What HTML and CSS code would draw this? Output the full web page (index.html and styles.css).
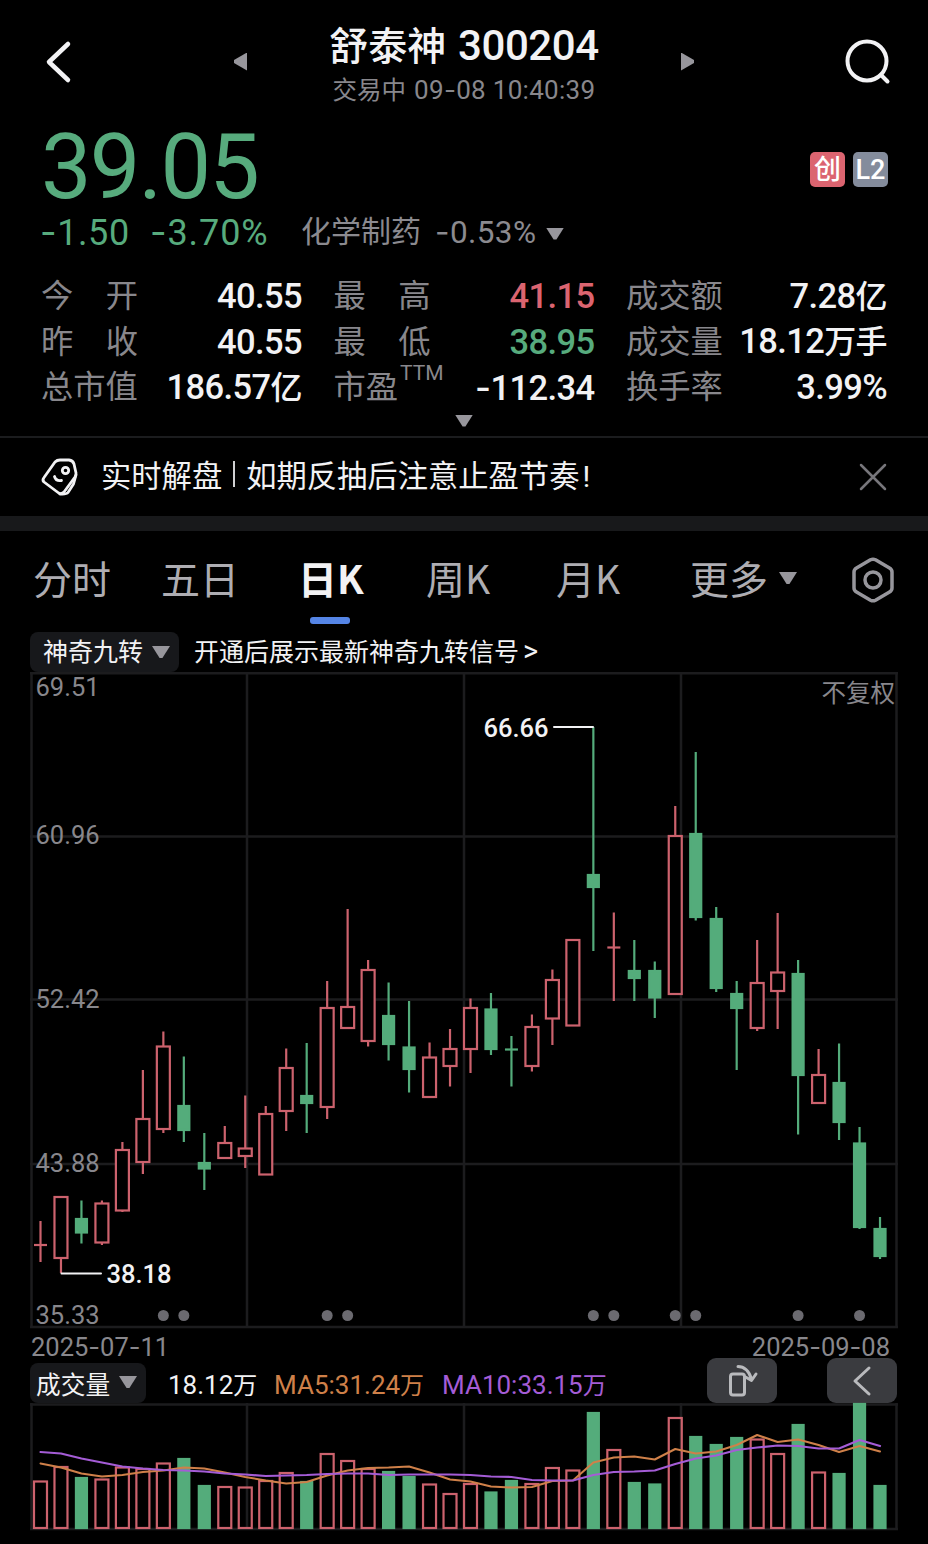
FILE: index.html
```html
<!DOCTYPE html>
<html lang="zh-CN">
<head>
    <meta charset="UTF-8">
    <meta name="viewport" content="width=device-width, initial-scale=1.0">
    <title>舒泰神 300204</title>
    <link rel="stylesheet" href="styles.css">
</head>
<body>

<header class="header">
    <svg class="back" width="28" height="44" viewBox="0 0 28 44"><path d="M24 4 L5 22 L24 40"/></svg>
    <span class="tri tri-left"></span>
    <div class="title">
        <h1>舒泰神 <span class="code">300204</span></h1>
        <p>交易中 <span class="time">09<i>-</i>08 10:40:39</span></p>
    </div>
    <span class="tri tri-right"></span>
    <svg class="search" width="48" height="48" viewBox="0 0 48 48"><circle cx="22" cy="22" r="19.5"/><path d="M36 36 L42.500 42.500"/></svg>
</header>

<section class="quote">
    <div class="price-row">
        <span class="price">39.05</span>
        <span class="badge badge-red">创</span>
        <span class="badge badge-gray">L2</span>
    </div>
    <div class="change-row">
        <span class="change"><i>-</i>1.50</span>
        <span class="change percent"><i>-</i>3.70%</span>
        <span class="sector">化学制药</span>
        <span class="sector-change"><i>-</i>0.53%</span>
        <span class="tri tri-down"></span>
    </div>
    <div class="stats">
        <div class="stat"><span class="label"><b>今</b><b>开</b></span><span class="value">40.55</span></div>
        <div class="stat"><span class="label"><b>最</b><b>高</b></span><span class="value up">41.15</span></div>
        <div class="stat"><span class="label">成交额</span><span class="value">7.28<em>亿</em></span></div>
        <div class="stat"><span class="label"><b>昨</b><b>收</b></span><span class="value">40.55</span></div>
        <div class="stat"><span class="label"><b>最</b><b>低</b></span><span class="value down">38.95</span></div>
        <div class="stat"><span class="label">成交量</span><span class="value">18.12<em>万手</em></span></div>
        <div class="stat"><span class="label">总市值</span><span class="value">186.57<em>亿</em></span></div>
        <div class="stat"><span class="label">市盈<sup>TTM</sup></span><span class="value"><i>-</i>112.34</span></div>
        <div class="stat"><span class="label">换手率</span><span class="value">3.99%</span></div>
    </div>
    <div class="expand"><span class="tri tri-down"></span></div>
</section>

<section class="notice">
    <svg class="tag" width="38" height="40" viewBox="0 0 38 40">
        <path d="M14 5 Q16 3 19 3 L28 3 Q32 3.500 33 7 L35 16 Q35.200 18 34 20 L23 35 Q20 38 17 35.500 L3 25 Q1 23 3 20.500 Z"/>
        <path d="M35 18 L32.500 27 L27 35.500 Q25.500 37.500 19 37"/>
        <circle cx="24.500" cy="13.500" r="3.200"/>
        <path d="M13.500 19.500 Q15 24.500 20.500 23.500"/>
    </svg>
    <p>实时解盘<span class="bar"></span>如期反抽后注意止盈节奏<span class="mark-end">!</span></p>
    <svg class="close" width="28" height="28" viewBox="0 0 28 28"><path d="M2 2 L26 26 M26 2 L2 26"/></svg>
</section>

<nav class="tabs">
    <a>分时</a>
    <a>五日</a>
    <a class="active">日K</a>
    <a>周K</a>
    <a>月K</a>
    <a class="more">更多<span class="tri tri-down"></span></a>
    <svg class="setting" width="44" height="48" viewBox="0 0 44 48">
        <path d="M19.500 3.800 Q22 2.500 24.500 3.800 L38.500 12 Q41 13.500 41 16 L41 32 Q41 34.500 38.500 36 L24.500 44.200 Q22 45.500 19.500 44.200 L5.500 36 Q3 34.500 3 32 L3 16 Q3 13.500 5.500 12 Z"/>
        <circle cx="22" cy="24" r="8"/>
    </svg>
</nav>

<main>
    <div class="signal">
        <span class="pill">神奇九转<span class="tri tri-down"></span></span>
        <span class="signal-text">开通后展示最新神奇九转信号<small>&gt;</small></span>
    </div>

    <svg class="kline" id="kline" width="868" height="656" viewBox="30 672 868 656"></svg>

    <div class="dates">
        <span>2025<i>-</i>07<i>-</i>11</span>
        <span>2025<i>-</i>09<i>-</i>08</span>
    </div>

    <div class="volume-bar">
        <span class="pill">成交量<span class="tri tri-down"></span></span>
        <span class="vol">18.12<em>万</em></span>
        <span class="ma5">MA5:31.24<em>万</em></span>
        <span class="ma10">MA10:33.15<em>万</em></span>
        <button class="rotate">
            <svg width="32" height="36" viewBox="0 0 32 36"><rect x="4.500" y="11" width="14" height="21" rx="2.500"/><path d="M12 3.500 Q21.500 3.500 25.500 16 M19.500 14 L25.500 17.500 L30 11"/></svg>
        </button>
        <button class="fold">
            <svg width="20" height="32" viewBox="0 0 20 32"><path d="M17 3 L3 16 L17 29"/></svg>
        </button>
    </div>

    <svg class="volume" id="volume" width="868" height="127" viewBox="30 1403 868 127"></svg>
</main>

<script src="chart.js"></script>
</body>
</html>
```
FILE: styles.css
```css
* {
    box-sizing: border-box;
}

body {
    margin: 0;
    width: 928px;
    height: 1544px;
    overflow: hidden;
    background-color: #000;
    color: #f2f2f4;
    font-family: Roboto, "Noto Sans CJK SC", sans-serif;
}

h1, p {
    margin: 0;
    font-weight: normal;
}

/* wide minus sign */
i {
    font-family: Inter, sans-serif;
    font-style: normal;
}

em, b {
    font-style: normal;
    font-weight: inherit;
}

svg {
    display: block;
    overflow: visible;
    fill: none;
    stroke-linecap: round;
    stroke-linejoin: round;
}

/* Small arrows */
.tri {
    display: inline-block;
    background-color: #97969c;
}

.tri-down {
    width: 18px;
    height: 12px;
    clip-path: polygon(0 0, 100% 0, 58% 100%, 42% 100%);
}

.tri-left {
    width: 13px;
    height: 18px;
    clip-path: polygon(100% 0, 100% 100%, 0 58%, 0 42%);
}

.tri-right {
    width: 13px;
    height: 18px;
    clip-path: polygon(0 0, 0 100%, 100% 58%, 100% 42%);
}

/* Header */
.header {
    display: flex;
    align-items: center;
    height: 117px;
    padding: 6px 35px 0 44px;
}

.back {
    stroke: #f2f2f4;
    stroke-width: 4.5;
}

.header .tri-left {
    margin-left: 162px;
}

.title {
    width: 434px;
    padding-top: 3px;
    text-align: center;
}

.title h1 {
    font-size: 39px;
    line-height: 51px;
    font-weight: 500;
    white-space: nowrap;
}

.title .code {
    font-size: 42px;
    letter-spacing: -0.4px;
    margin-left: 2px;
}

.title p {
    font-size: 24.5px;
    line-height: 33px;
    color: #88878c;
}

.title .time {
    font-size: 26px;
    letter-spacing: 0.3px;
    margin-left: 2px;
}

.search {
    margin-left: auto;
    margin-top: 2px;
    stroke: #f2f2f4;
    stroke-width: 4;
}

/* Quote */
.quote {
    padding: 0 41px;
    border-bottom: 2px solid #1b1c1e;
    height: 321px;
}

.price-row {
    display: flex;
    align-items: center;
    height: 100px;
    margin-right: -1px;
}

.price {
    flex: 1;
    font-size: 90px;
    line-height: 100px;
    padding-top: 2px;
    letter-spacing: -1.8px;
    color: #57ab7d;
}

.badge {
    width: 35px;
    height: 35px;
    border-radius: 5px;
    margin-left: 8px;
    margin-top: 5px;
    font-size: 27px;
    line-height: 36px;
    font-weight: 500;
    text-align: center;
    color: #fff;
}

.badge-red {
    background-color: #db6470;
}

.badge-gray {
    background-color: #848c9c;
}

.change-row {
    display: flex;
    align-items: center;
    height: 30px;
    line-height: 30px;
    color: #8b8a8f;
}

.change {
    font-size: 36px;
    letter-spacing: 0.6px;
    color: #57ab7d;
    width: 110px;
    margin-left: -1px;
}

.percent {
    width: 151px;
    letter-spacing: 0.9px;
    margin-left: 0;
}

.sector {
    font-size: 30px;
    line-height: 32px;
    width: 134px;
}

.sector-change {
    font-size: 31.5px;
    letter-spacing: 0.4px;
    width: 110px;
}

.change-row .tri {
    margin-top: 3px;
    margin-left: 1px;
}

.stats {
    display: grid;
    grid-template-columns: repeat(3, 261px);
    column-gap: 31.5px;
    grid-auto-rows: 45.5px;
    margin-top: 27px;
}

.stat {
    display: flex;
    justify-content: space-between;
    align-items: center;
    white-space: nowrap;
    line-height: 45px;
}

.label {
    display: flex;
    justify-content: space-between;
    width: 97px;
    font-size: 32.3px;
    color: #88878c;
}

.label sup {
    font-size: 21px;
    line-height: 16px;
    margin-left: 2px;
}

.value {
    font-size: 34.5px;
    font-weight: 500;
    letter-spacing: -0.6px;
}

.value em {
    font-size: 32px;
}

.up {
    color: #db6470;
}

.down {
    color: #57ab7d;
}

.expand {
    display: flex;
    justify-content: center;
    padding-top: 4px;
}

/* Notice */
.notice {
    display: flex;
    align-items: center;
    height: 93px;
    padding: 0 41px;
    border-bottom: 15px solid #18191b;
}

.tag {
    stroke: #f2f2f4;
    stroke-width: 2.8;
}

.notice p {
    flex: 1;
    margin-left: 22px;
    font-size: 30.3px;
    line-height: 40px;
}

.notice .bar {
    display: inline-block;
    width: 2px;
    height: 26px;
    margin: 0 11px;
    background-color: #d0d0d2;
}

.notice .mark-end {
    margin-left: 3px;
}

.close {
    stroke: #77767b;
    stroke-width: 2.5;
}

/* Tabs */
.tabs {
    display: grid;
    grid-template-columns: 128px 137px 128px 130px 134px 161px 44px;
    align-items: center;
    height: 101px;
    padding: 0 0 3px 33px;
}

.tabs a {
    font-family: "Noto Sans CJK SC", sans-serif;
    font-size: 39px;
    line-height: 50px;
    padding-bottom: 6px;
    color: #aeadb2;
}

.tabs .active {
    position: relative;
    font-weight: 700;
    color: #f2f2f4;
}

.tabs .active::after {
    content: "";
    position: absolute;
    left: 12px;
    bottom: -16px;
    width: 40px;
    height: 7px;
    border-radius: 3px;
    background-color: #5585e6;
}

.more .tri {
    margin-left: 11px;
    margin-bottom: 10px;
}

.setting {
    stroke: #97969c;
    stroke-width: 3.5;
}

/* Chart area */
main {
    width: 868px;
    margin: 0 30px;
}

.signal {
    display: flex;
    align-items: center;
    height: 40px;
    font-size: 25px;
    line-height: 36px;
}

.pill {
    display: flex;
    align-items: center;
    justify-content: space-between;
    width: 149px;
    height: 40px;
    padding: 2px 9px 0 13px;
    border-radius: 8px;
    background-color: #17181b;
    white-space: nowrap;
}

.pill .tri {
    margin-bottom: 2px;
}

.signal-text {
    margin-left: 15px;
    padding-top: 2px;
}

.signal-text small {
    font-size: 29px;
    line-height: 30px;
    margin-left: 4px;
}

.dates {
    display: flex;
    justify-content: space-between;
    height: 30px;
    padding: 3px 8px 0 1px;
    font-size: 25.5px;
    line-height: 31px;
    color: #88878c;
}

.volume-bar {
    display: flex;
    align-items: center;
    height: 45px;
    font-size: 26px;
    white-space: nowrap;
}

.volume-bar .pill {
    width: 116px;
    padding: 0 9px 0 6px;
    margin-top: 5px;
    font-size: 24.7px;
}

.volume-bar em {
    font-size: 24px;
}

.vol, .ma5, .ma10 {
    margin-top: 6px;
}

.vol {
    width: 106px;
    margin-left: 22px;
}

.ma5 {
    width: 168px;
    color: #cf8049;
}

.ma10 {
    color: #a45cd6;
}

.volume-bar button {
    display: flex;
    align-items: center;
    justify-content: center;
    width: 70px;
    height: 45px;
    padding: 0;
    border: none;
    border-radius: 9px;
    background-color: #3a3b3f;
    stroke: #b9babd;
    stroke-width: 3;
}

.volume-bar .rotate {
    margin-left: auto;
    margin-right: 50px;
}

.volume-bar .fold {
    margin-right: 1px;
}

/* Chart drawing */
.grid {
    stroke: #1c1c1e;
    stroke-width: 2.5;
    stroke-linecap: butt;
}

.candle-up {
    fill: #000;
    stroke: #cc626d;
    stroke-width: 2.2;
    stroke-linecap: butt;
    stroke-linejoin: miter;
}

.volume .candle-up {
    fill: none;
}

.candle-down {
    fill: #54ac7b;
    stroke: #54ac7b;
    stroke-width: 2.2;
    stroke-linecap: butt;
    stroke-linejoin: miter;
}

.dot {
    fill: #6b6a70;
}

.axis {
    fill: #88878c;
    font-size: 25.5px;
}

.right {
    font-size: 24.5px;
    text-anchor: end;
}

.mark {
    fill: #f2f2f4;
    font-size: 25.5px;
    font-weight: 500;
}

.mark-line {
    stroke: #f2f2f4;
    stroke-width: 2;
}

.line5 {
    stroke: #cf8049;
    stroke-width: 2;
}

.line10 {
    stroke: #a45cd6;
    stroke-width: 2.2;
}
```
FILE: chart.js
```js
// [direction, high, body top, body bottom, low]
const candles = [
    ["up", 1221, 1245, 1245, 1262], ["up", 1197, 1196, 1259, 1273],
    ["down", 1200.5, 1218, 1233.5, 1243.5], ["up", 1200.5, 1202.5, 1243.5, 1245],
    ["up", 1142, 1149, 1211.5, 1212], ["up", 1070, 1118, 1163, 1174],
    ["up", 1031.5, 1045.5, 1130, 1133], ["down", 1056.5, 1105, 1131, 1142],
    ["down", 1133, 1162, 1169.5, 1190], ["up", 1126, 1142, 1159, 1159],
    ["up", 1095.5, 1147.5, 1157, 1168], ["up", 1106, 1113, 1175.5, 1175],
    ["up", 1048.5, 1067, 1112, 1131], ["down", 1043, 1095, 1104, 1133],
    ["up", 981, 1007, 1108, 1119], ["up", 909, 1006, 1029, 1028],
    ["up", 960, 969, 1042, 1046.5], ["down", 982.5, 1015, 1045, 1060.5],
    ["down", 1001, 1046.5, 1070, 1092.5], ["up", 1042.5, 1056.5, 1098, 1097],
    ["up", 1029, 1048, 1067, 1086.5], ["up", 998.5, 1007, 1050, 1073],
    ["down", 993, 1008.5, 1050, 1055], ["down", 1036, 1049.5, 1049.5, 1086.5],
    ["up", 1014.5, 1026, 1067, 1071.5], ["up", 969.5, 979, 1019.5, 1045],
    ["up", 940, 939, 1026.5, 1026], ["down", 727, 874, 888, 951],
    ["up", 912.5, 947.5, 947.5, 1001], ["down", 940, 970, 979, 1001],
    ["down", 961.5, 970, 998.5, 1018], ["up", 806, 835, 995, 994],
    ["down", 752, 833, 918, 920.5], ["down", 907, 918, 989, 992],
    ["down", 981, 993, 1009, 1070], ["up", 940, 982, 1029, 1031],
    ["up", 913, 971.5, 992, 1029], ["down", 960, 973, 1076, 1134.5],
    ["up", 1049, 1074, 1104, 1103], ["down", 1043.5, 1082, 1123, 1140],
    ["down", 1127, 1142.5, 1228, 1229], ["down", 1217, 1228, 1257, 1259]
];

const volumes = [
    1480.5, 1466, 1477, 1478.5, 1466.5, 1468, 1462.5, 1458, 1485, 1486, 1486.5,
    1480, 1472, 1481, 1453, 1460, 1468, 1471, 1476, 1483.5, 1493, 1483, 1491.5,
    1480, 1483, 1467, 1469.5, 1412, 1449, 1482, 1483.5, 1417, 1436, 1444, 1437,
    1438.5, 1453, 1424, 1471.5, 1473, 1403, 1485
];

const ma5 = [
    1463.5, 1467.5, 1473.5, 1476.5, 1475, 1472, 1470.5, 1467.5, 1468.5, 1472.5,
    1477, 1480.5, 1483.5, 1482, 1475.5, 1470.5, 1468, 1467.5, 1466.5, 1472.5,
    1479.5, 1481.5, 1486.5, 1487.5, 1487, 1481, 1480.5, 1462.5, 1457.5, 1456.5,
    1459.5, 1449, 1453.5, 1451.5, 1445, 1435, 1442, 1439.5, 1445, 1452, 1446, 1451.5
];

const ma10 = [
    1452, 1453.5, 1458.5, 1462.5, 1466.5, 1468.5, 1470, 1470.5, 1471.5, 1473.5,
    1474.5, 1476, 1475.5, 1475, 1474, 1473.5, 1473.5, 1475, 1474.5, 1474.5,
    1474.5, 1475, 1476.5, 1477, 1480, 1480.5, 1480.5, 1475, 1472, 1471.5,
    1470.5, 1464, 1458.5, 1455.5, 1450, 1447.5, 1445.5, 1446, 1448.5, 1448.5, 1440, 1446
];

const dots = [6, 7, 14, 15, 27, 28, 31, 32, 37, 40];
const columns = [31.5, 247, 464, 681, 896.5];

const xOf = i => 40.5 + i * 20.476;

function drawGrid(rows, top, bottom) {
    let d = "";
    columns.forEach(x => d += `M${x} ${top}V${bottom}`);
    rows.forEach(y => d += `M30 ${y}H898`);
    return `<path class="grid" d="${d}"/>`;
}

// Red bars are hollow, green ones are solid
function drawBox(dir, x, top, bottom) {
    const half = dir === "up" ? 6.5 : 5.5;
    return `<rect class="candle-${dir}" x="${x - half}" y="${top + 1}" width="${half * 2}" height="${bottom - top - 2}"/>`;
}

function renderKline() {
    let html = drawGrid([673.2, 836.5, 999.5, 1164, 1327], 672, 1328);
    html += `
        <text class="axis" x="35.5" y="696">69.51</text>
        <text class="axis" x="35.5" y="844">60.96</text>
        <text class="axis" x="35.5" y="1008">52.42</text>
        <text class="axis" x="35.5" y="1172">43.88</text>
        <text class="axis" x="35.5" y="1324">35.33</text>
        <text class="axis right" x="895" y="701.5">不复权</text>`;
    candles.forEach(([dir, high, top, bottom, low], i) => {
        const x = xOf(i);
        html += `<path class="candle-${dir}" d="M${x} ${high}V${low}"/>`;
        if (top === bottom) {
            html += `<path class="candle-${dir}" d="M${x - 6.5} ${top}H${x + 6.5}"/>`;
        } else {
            html += drawBox(dir, x, top, bottom);
        }
    });
    dots.forEach(i => html += `<circle class="dot" cx="${xOf(i)}" cy="1315.5" r="5.5"/>`);
    html += `
        <path class="mark-line" d="M554 727H593 M61.500 1273.500H101"/>
        <text class="mark" x="483.5" y="736.5">66.66</text>
        <text class="mark" x="106.5" y="1283">38.18</text>`;
    document.getElementById("kline").innerHTML = html;
}

function renderVolume() {
    let html = drawGrid([1404.5, 1529], 1403, 1530);
    volumes.forEach((top, i) => html += drawBox(candles[i][0], xOf(i), top, 1529));
    const points = list => list.map((y, i) => `${xOf(i)},${y}`).join(" ");
    html += `<polyline class="line5" points="${points(ma5)}"/>`;
    html += `<polyline class="line10" points="${points(ma10)}"/>`;
    document.getElementById("volume").innerHTML = html;
}

renderKline();
renderVolume();
```
